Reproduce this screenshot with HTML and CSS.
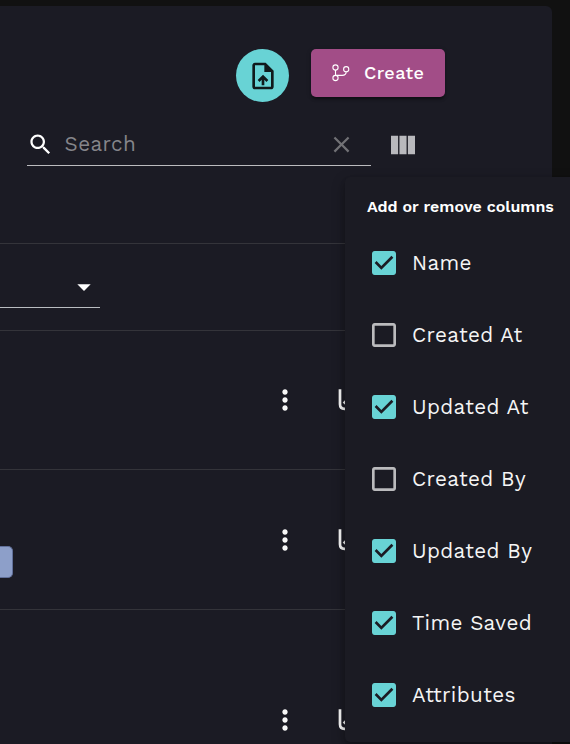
FILE: index.html
```html
<!DOCTYPE html>
<html lang="en">
<head>
<meta charset="utf-8">
<title>Columns</title>
<link rel="stylesheet" href="styles.css">
</head>
<body>
<svg class="defs" aria-hidden="true">
  <symbol id="checked" viewBox="0 0 24 24"><path d="M19 3H5c-1.11 0-2 .9-2 2v14c0 1.1.89 2 2 2h14c1.11 0 2-.9 2-2V5c0-1.1-.89-2-2-2zm-9 14l-5-5 1.41-1.41L10 14.17l7.59-7.59L19 8l-9 9z"/></symbol>
  <symbol id="unchecked" viewBox="0 0 24 24"><path d="M19 5v14H5V5h14m0-2H5c-1.1 0-2 .9-2 2v14c0 1.1.9 2 2 2h14c1.1 0 2-.9 2-2V5c0-1.1-.9-2-2-2z"/></symbol>
  <symbol id="more" viewBox="0 0 24 24"><path d="M12 8c1.1 0 2-.9 2-2s-.9-2-2-2-2 .9-2 2 .9 2 2 2zm0 2c-1.1 0-2 .9-2 2s.9 2 2 2 2-.9 2-2-.9-2-2-2zm0 6c-1.1 0-2 .9-2 2s.9 2 2 2 2-.9 2-2-.9-2-2-2z"/></symbol>
  <symbol id="chart" viewBox="0 0 32 32"><path d="M6 5.300v15q0 4.500 4.500 4.500H27M9.700 19.500l6-6 4 4 7-8" fill="none" stroke="currentColor" stroke-width="2.700"/></symbol>
</svg>
<main class="panel">
  <div class="actions">
    <button class="upload" aria-label="Upload"><svg class="icon" viewBox="0 0 24 24"><path d="M14 2H6c-1.1 0-1.99.9-1.99 2L4 20c0 1.1.89 2 1.99 2H18c1.1 0 2-.9 2-2V8l-6-6zm4 18H6V4h7v5h5v11zM8 15.01l1.41 1.41L11 14.84V19h2v-4.16l1.59 1.59L16 15.01 12.01 11 8 15.01z"/></svg></button>
    <button class="create"><svg class="branch" viewBox="0 0 18 18"><circle cx="3.500" cy="3.500" r="2.600"/><circle cx="14.200" cy="5.200" r="2.600"/><circle cx="3.500" cy="14" r="2.600"/><path d="M3.500 6.100v5.300M14.200 7.800c0 2.600-1.500 3.600-4 3.600H3.500"/></svg><span>Create</span></button>
  </div>
  <div class="toolbar">
    <div class="search">
      <svg class="small" viewBox="0 0 24 24"><path d="M15.5 14h-.79l-.28-.27C15.41 12.59 16 11.110 16 9.500 16 5.910 13.090 3 9.500 3S3 5.910 3 9.500 5.910 16 9.500 16c1.610 0 3.090-.59 4.230-1.570l.27.28v.79l5 4.990L20.490 19l-4.990-5zm-6 0C7.010 14 5 11.990 5 9.500S7.010 5 9.500 5 14 7.010 14 9.500 11.990 14 9.500 14z"/></svg>
      <span class="placeholder">Search</span>
      <svg class="small clear" viewBox="0 0 24 24"><path d="M19 6.410L17.590 5 12 10.590 6.410 5 5 6.410 10.590 12 5 17.590 6.410 19 12 13.410 17.590 19 19 17.590 13.410 12z"/></svg>
    </div>
    <svg class="icon columns" viewBox="0 0 24 24"><path d="M14.670 5v14H9.330V5h5.340zm1 14H21V5h-5.330v14zm-7.340 0V5H3v14h5.330z"/></svg>
  </div>
  <div class="head"></div>
  <div class="filter"><div class="select"><svg class="icon" viewBox="0 0 24 24"><path d="M7 10l5 5 5-5z"/></svg></div></div>
  <div class="row"><svg class="icon"><use href="#more"/></svg><svg class="icon"><use href="#chart"/></svg></div>
  <div class="row second"><span class="chip"></span><svg class="icon"><use href="#more"/></svg><svg class="icon"><use href="#chart"/></svg></div>
  <div class="row last"><svg class="icon"><use href="#more"/></svg><svg class="icon"><use href="#chart"/></svg></div>
</main>
<aside class="menu">
  <h2>Add or remove columns</h2>
  <ul>
    <li><svg class="icon on"><use href="#checked"/></svg><span>Name</span></li>
    <li><svg class="icon off"><use href="#unchecked"/></svg><span>Created At</span></li>
    <li><svg class="icon on"><use href="#checked"/></svg><span>Updated At</span></li>
    <li><svg class="icon off"><use href="#unchecked"/></svg><span>Created By</span></li>
    <li><svg class="icon on"><use href="#checked"/></svg><span>Updated By</span></li>
    <li><svg class="icon on"><use href="#checked"/></svg><span>Time Saved</span></li>
    <li><svg class="icon on"><use href="#checked"/></svg><span>Attributes</span></li>
  </ul>
</aside>
</body>
</html>
```
FILE: styles.css
```css
* { box-sizing: border-box; }
html, body { height: 100%; overflow: hidden; }
body { margin: 0; padding-top: 6px; background: #111; color: #fff; font-family: "Work Sans", Inter, "Liberation Sans", sans-serif; position: relative; }
.defs { display: none; }
svg { fill: currentColor; flex: none; display: block; }
button { border: 0; padding: 0; font: inherit; }
.icon { width: 32px; height: 32px; }
.small { width: 27px; height: 27px; }
.panel { width: 552px; height: 738px; background: #1b1b24; border-radius: 0 6px 0 0; overflow: hidden; }
.actions { display: flex; gap: 22px; padding: 43px 0 0 236px; height: 117px; align-items: flex-start; }
.upload { width: 53px; height: 53px; border-radius: 50%; background: #68d3d5; color: #101a1c; display: grid; place-items: center; }
.create { width: 134px; height: 48px; border-radius: 5px; background: #a24d87; color: #fff; display: flex; align-items: center; padding-left: 21px; gap: 14px; font-size: 18px; font-weight: 500; letter-spacing: .4px; box-shadow: 0 3px 3px -1px #0006, 0 1px 5px #0003; }
.create span { padding-bottom: 2px; }
.branch { width: 18px; height: 18px; fill: none; stroke: #fff; stroke-width: 1.100; }
.toolbar { display: flex; gap: 16px; height: 43px; padding-left: 27px; }
.search { width: 344px; border-bottom: 1px solid #bbbbbe; display: flex; align-items: center; padding-right: 16px; }
.placeholder { flex: 1; padding-left: 10.500px; color: #85858a; font-size: 20.670px; letter-spacing: .4px; }
.clear { color: #717175; }
.columns { color: #b9b9bd; margin-top: 6px; }
.head { height: 78px; border-bottom: 1px solid #34343a; }
.filter { height: 87px; border-bottom: 1px solid #34343a; padding-top: 15px; }
.select { width: 100px; height: 49px; border-bottom: 1px solid #b9bdc0; padding: 12px 0 0 68px; }
.row { height: 139px; border-bottom: 1px solid #34343a; display: flex; align-items: center; justify-content: flex-end; gap: 33px; padding-right: 186px; color: #f8f8f8; }
.second { height: 140px; }
.chip { width: 13px; height: 32px; margin: 45px auto 0 0; border-radius: 0 5px 5px 0; background: #8d9fc9; border: 1px solid #61709a; border-left: 0; }
.last { height: 220px; border: 0; }
.menu { position: absolute; left: 345px; top: 177px; width: 240px; height: 565px; padding-top: 20px; border-radius: 5px; background: #1b1b23; box-shadow: 0 5px 14px #0005, 0 3px 5px #0002; }
h2 { margin: 0 0 0 22px; font-size: 16px; line-height: 20px; font-weight: 600; white-space: nowrap; }
ul { margin: 10px 0 0; padding: 0; list-style: none; }
li { height: 72px; display: flex; align-items: center; gap: 12px; padding-left: 23px; font-size: 20.670px; letter-spacing: .38px; color: #f5f5f5; white-space: nowrap; }
.on { color: #68d3d5; }
.off { color: #bbbbbd; }
```
